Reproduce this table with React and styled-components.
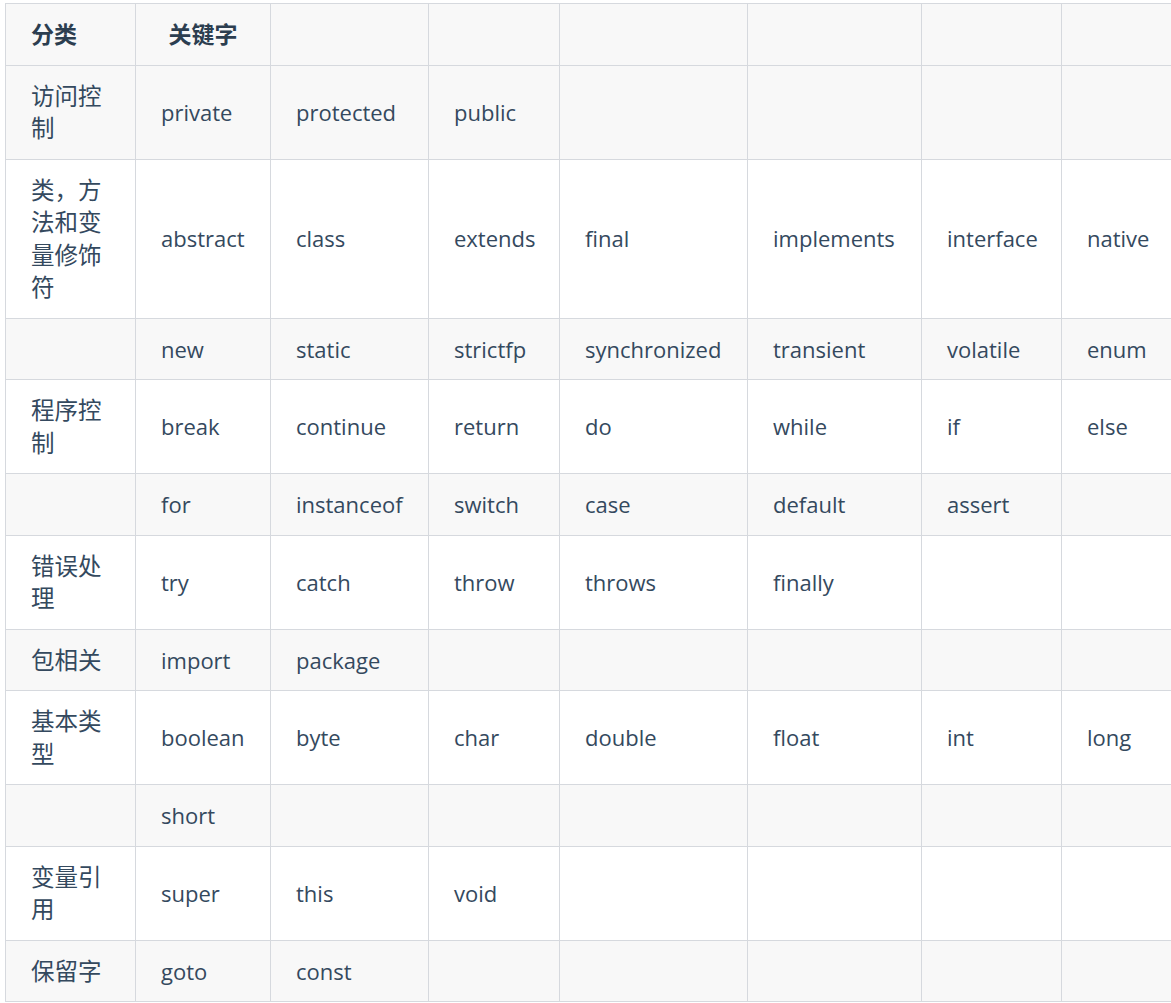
import styled, { createGlobalStyle } from 'styled-components';

const GlobalStyle = createGlobalStyle`
  html, body {
    margin: 0;
    padding: 0;
    background: #ffffff;
  }
  body {
    font-family: "Open Sans", "Noto Sans CJK SC", sans-serif;
  }
`

const Page = styled.div`
  box-sizing: border-box;
  padding: 3px 0 0 5px;
  width: 1171px;
  overflow: hidden;
`

const Table = styled.table`
  border-collapse: collapse;
  table-layout: fixed;
  width: 1180px;
  font-size: 22px;
  line-height: 32.5px;
  color: #34495e;
`

const Col = styled.col`
  width: ${p => p.$w}px;
`

const Row = styled.tr`
  background-color: ${p => p.$shaded ? '#f8f8f8' : '#ffffff'};
`

const HeadCell = styled.th`
  border: 1px solid #d6d9de;
  padding: 14px 25px;
  font-size: 23px;
  font-weight: 700;
  color: #2c3e50;
  text-align: ${p => p.$align || 'left'};
  vertical-align: middle;
  white-space: nowrap;
`

const Cell = styled.td`
  border: 1px solid #d6d9de;
  padding: 14px 25px;
  font-size: ${p => p.$cjk ? '23.5px' : '22px'};
  vertical-align: middle;
  text-align: left;
  white-space: ${p => p.$cjk ? 'normal' : 'nowrap'};
`

const widths = [130, 135, 158, 131, 188, 174, 140, 124]

const rows = [
  ['访问控制', 'private', 'protected', 'public'],
  ['类，方法和变量修饰符', 'abstract', 'class', 'extends', 'final', 'implements', 'interface', 'native'],
  ['', 'new', 'static', 'strictfp', 'synchronized', 'transient', 'volatile', 'enum'],
  ['程序控制', 'break', 'continue', 'return', 'do', 'while', 'if', 'else'],
  ['', 'for', 'instanceof', 'switch', 'case', 'default', 'assert'],
  ['错误处理', 'try', 'catch', 'throw', 'throws', 'finally'],
  ['包相关', 'import', 'package'],
  ['基本类型', 'boolean', 'byte', 'char', 'double', 'float', 'int', 'long'],
  ['', 'short'],
  ['变量引用', 'super', 'this', 'void'],
  ['保留字', 'goto', 'const'],
]

const App = () => {
  return (
    <>
      <GlobalStyle />
      <Page>
        <Table>
          <colgroup>
            {widths.map((w, i) => <Col key={i} $w={w} />)}
          </colgroup>
          <thead>
            <Row $shaded>
              <HeadCell>分类</HeadCell>
              <HeadCell $align="center">关键字</HeadCell>
              {[0, 1, 2, 3, 4, 5].map(i => <HeadCell key={i} />)}
            </Row>
          </thead>
          <tbody>
            {rows.map((r, i) => (
              <Row key={i} $shaded={i % 2 === 0}>
                {widths.map((_, j) => <Cell key={j} $cjk={j === 0}>{r[j] || ''}</Cell>)}
              </Row>
            ))}
          </tbody>
        </Table>
      </Page>
    </>
  )
}

export default App
